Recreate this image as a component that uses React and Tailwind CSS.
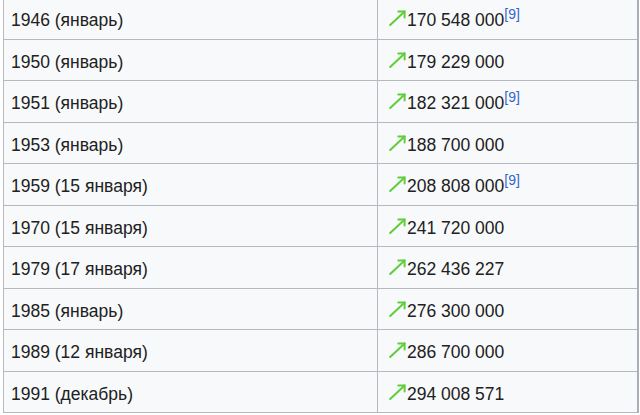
const rows = [
  { date: "1946 (январь)", value: "170 548 000", note: "9" },
  { date: "1950 (январь)", value: "179 229 000" },
  { date: "1951 (январь)", value: "182 321 000", note: "9" },
  { date: "1953 (январь)", value: "188 700 000" },
  { date: "1959 (15 января)", value: "208 808 000", note: "9" },
  { date: "1970 (15 января)", value: "241 720 000" },
  { date: "1979 (17 января)", value: "262 436 227" },
  { date: "1985 (январь)", value: "276 300 000" },
  { date: "1989 (12 января)", value: "286 700 000" },
  { date: "1991 (декабрь)", value: "294 008 571" },
];

function Increase() {
  return (
    <svg width="18" height="16" viewBox="0 0 18 16" className="inline-block align-baseline" fill="none">
      <path d="M1.2 15 L15.6 1.4" stroke="#5fce3b" strokeWidth="2" strokeLinecap="round" />
      <path d="M9.3 1.4 H15.6 V7.6" stroke="#5fce3b" strokeWidth="2" strokeLinecap="round" strokeLinejoin="round" />
    </svg>
  );
}

export default function App() {
  return (
    <div className="w-[640px] h-[415px] overflow-hidden bg-white pl-[3px]" style={{ fontFamily: '"Liberation Sans", Arial, sans-serif' }}>
      <div className="w-[636px] -mt-[2px] bg-[#f8f9fa] border-l border-r-2 border-l-[#b4b9bf] border-r-[#a9afb6] text-[17.5px] text-[#202122]">
        {rows.map((r) => (
          <div key={r.date} className="grid grid-cols-[374px_1fr] h-[41.5px] border-b border-[#b4b9bf]">
            <div className="flex items-center pt-[4px] pl-[7px] border-r border-[#b4b9bf]">
              <span>{r.date}</span>
            </div>
            <div className="flex items-center pt-[4px] pl-[11px]">
              <span className="whitespace-nowrap">
                <Increase />
                {r.value}
                {r.note && (
                  <span className="relative -top-[7px] text-[14px] text-[#3366cc] leading-none">[{r.note}]</span>
                )}
              </span>
            </div>
          </div>
        ))}
      </div>
    </div>
  );
}
